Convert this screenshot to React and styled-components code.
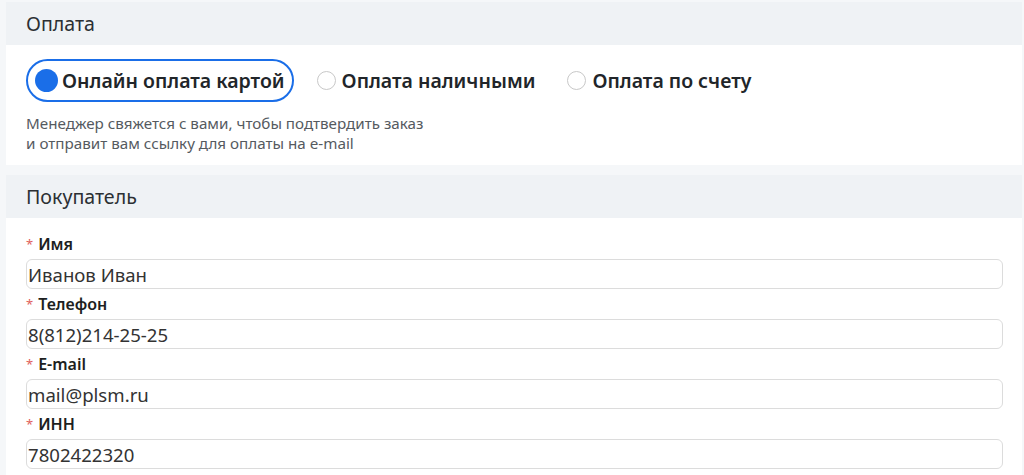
import React, { useState } from "react";
import styled, { createGlobalStyle } from "styled-components";

const GlobalStyle = createGlobalStyle`
  html, body {
    margin: 0;
    padding: 0;
    background: #f5f7f9;
    font-family: "Noto Sans", "Open Sans", sans-serif;
    color: #212529;
  }
`;

const Page = styled.div`
  display: flex;
  flex-direction: column;
  gap: 10px;
  padding: 2px 2px 0 6px;
`;

const Card = styled.section`
  background: #fff;
`;

const CardHeader = styled.div`
  height: 43px;
  display: flex;
  align-items: center;
  padding: 0 20px;
  background: #eff2f5;
  font-size: 19.6px;
  color: #2b2f33;
`;

const PaymentBody = styled.div`
  padding: 14px 20px 12px;
`;

const RadioRow = styled.div`
  display: flex;
  align-items: center;
  gap: 12px;
`;

const RadioOption = styled.label`
  display: flex;
  align-items: center;
  gap: ${(p) => (p.$active ? "4px" : "6px")};
  height: 43px;
  box-sizing: border-box;
  padding: 0 7px;
  border: 2px solid ${(p) => (p.$active ? "#1a6ee8" : "transparent")};
  border-radius: 22px;
  font-size: 19.5px;
  font-weight: 600;
  color: #212529;
  cursor: pointer;
`;

const Dot = styled.span`
  width: ${(p) => (p.$active ? "23px" : "19px")};
  height: ${(p) => (p.$active ? "23px" : "19px")};
  margin: ${(p) => (p.$active ? "0" : "0 0 0 2px")};
  box-sizing: border-box;
  border-radius: 50%;
  background: ${(p) => (p.$active ? "#1a6ee8" : "#fff")};
  border: ${(p) => (p.$active ? "none" : "1px solid #c8c8c8")};
  flex: none;
`;

const Hint = styled.p`
  margin: 11px 0 0;
  font-size: 15.2px;
  line-height: 20px;
  color: #555a5f;
`;

const BuyerBody = styled.div`
  padding: 11px 19px 6px 20px;
`;

const Field = styled.div`
  display: flex;
  flex-direction: column;
`;

const Label = styled.div`
  height: 30px;
  display: flex;
  align-items: center;
  gap: 5px;
  font-size: 16px;
  font-weight: 600;
  color: #1d1f21;
`;

const Star = styled.span`
  color: #e0605c;
  font-weight: 400;
  font-size: 13px;
`;

const Input = styled.input`
  height: 30px;
  box-sizing: border-box;
  border: 1px solid #dcdcdc;
  border-radius: 6px;
  padding: 0 1px;
  font-family: inherit;
  font-size: 18.6px;
  color: #333;
  background: #fff;
  outline: none;
`;

const options = [
  { id: "card", title: "Онлайн оплата картой" },
  { id: "cash", title: "Оплата наличными" },
  { id: "invoice", title: "Оплата по счету" },
];

const fields = [
  { label: "Имя", value: "Иванов Иван" },
  { label: "Телефон", value: "8(812)214-25-25" },
  { label: "E-mail", value: "mail@plsm.ru" },
  { label: "ИНН", value: "7802422320" },
];

const App = () => {
  const [method, setMethod] = useState("card");

  return (
    <Page>
      <GlobalStyle />
      <Card>
        <CardHeader>Оплата</CardHeader>
        <PaymentBody>
          <RadioRow>
            {options.map((o) => (
              <RadioOption
                key={o.id}
                $active={method === o.id}
                onClick={() => setMethod(o.id)}
              >
                <Dot $active={method === o.id} />
                {o.title}
              </RadioOption>
            ))}
          </RadioRow>
          <Hint>
            Менеджер свяжется с вами, чтобы подтвердить заказ
            <br />
            и отправит вам ссылку для оплаты на e-mail
          </Hint>
        </PaymentBody>
      </Card>
      <Card>
        <CardHeader>Покупатель</CardHeader>
        <BuyerBody>
          {fields.map((f) => (
            <Field key={f.label}>
              <Label>
                <Star>*</Star>
                {f.label}
              </Label>
              <Input defaultValue={f.value} />
            </Field>
          ))}
        </BuyerBody>
      </Card>
    </Page>
  );
};

export default App;
